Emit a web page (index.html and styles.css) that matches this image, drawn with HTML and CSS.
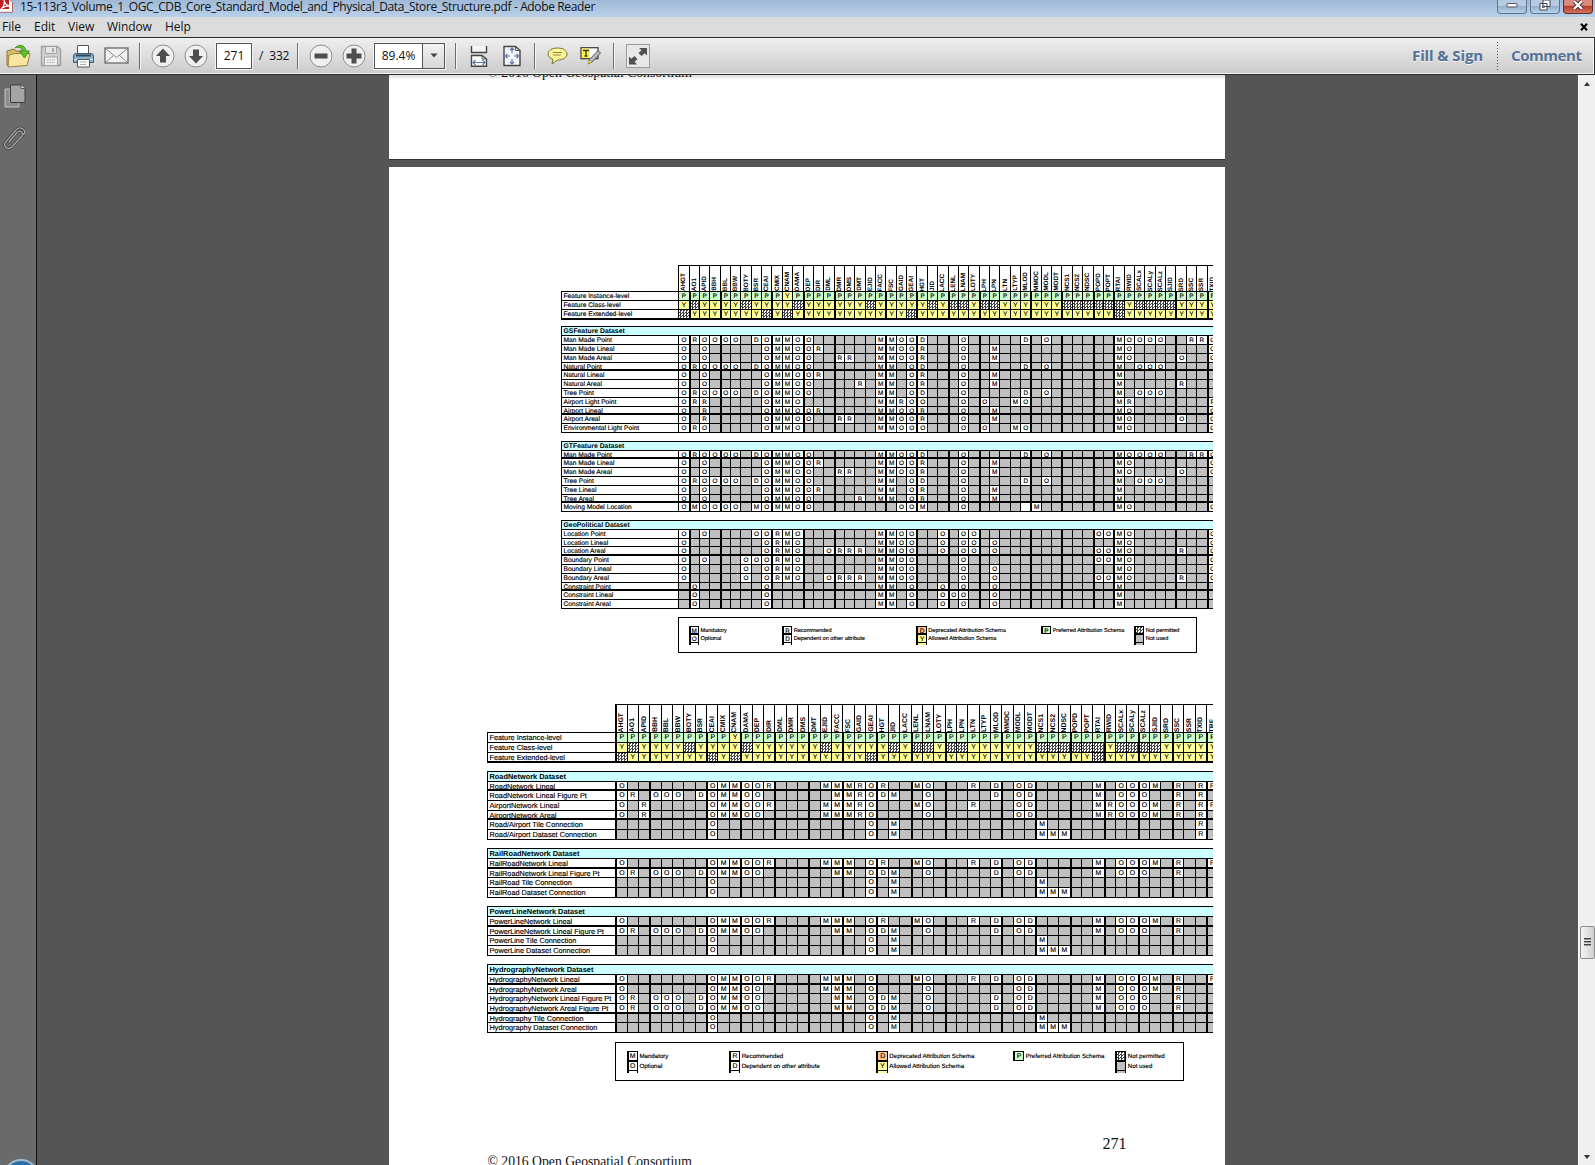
FILE: index.html
```html
<!DOCTYPE html>
<html lang="en">
<head>
<meta charset="utf-8">
<title>15-113r3_Volume_1_OGC_CDB_Core_Standard_Model_and_Physical_Data_Store_Structure.pdf - Adobe Reader</title>
<link rel="stylesheet" href="styles.css">
</head>
<body>
<div class="app">
  <header class="titlebar">
    <svg class="app-icon" width="13" height="13" viewBox="0 0 13 13"><path d="M-1 -1H9L12.500 2V12.300H-1Z" fill="#fff" stroke="#a66" stroke-width="1"/><rect width="9" height="9" fill="#c01c22"/><path d="M1 9C4.500 6 5 3 4 0M4.500 2C6 5 9 6.500 12 6.500M2 8C5 6 8 5.500 12 6" stroke="#fff" stroke-width="1.300" fill="none"/></svg>
    <span class="title">15-113r3_Volume_1_OGC_CDB_Core_Standard_Model_and_Physical_Data_Store_Structure.pdf - Adobe Reader</span>
    <div class="win-btns">
      <span class="win-btn"><svg width="12" height="10" viewBox="0 0 12 10"><rect x="1" y="3.5" width="10" height="3.5" rx="1" fill="#fff" stroke="#556"/></svg></span>
      <span class="win-btn"><svg width="12" height="12" viewBox="0 0 12 12"><path d="M4 1H11V7.500H4Z M1 4.500H8V11H1Z" fill="#fff" stroke="#445" stroke-width="1"/><rect x="3.500" y="7" width="2" height="1.500" fill="#7d99b8" stroke="#445" stroke-width=".7"/></svg></span>
      <span class="win-btn close"><svg width="12" height="10" viewBox="0 0 12 10"><path d="M2 1L10 9M10 1L2 9" stroke="#4b2530" stroke-width="4"/><path d="M2 1L10 9M10 1L2 9" stroke="#fff" stroke-width="2.400"/></svg></span>
    </div>
  </header>
  <nav class="menubar">
    <span class="m-file">File</span><span class="m-edit">Edit</span><span class="m-view">View</span><span class="m-window">Window</span><span class="m-help">Help</span>
    <svg class="doc-close" width="8" height="8" viewBox="0 0 8 8"><path d="M1 .8L7 7.200M7 .8L1 7.200" stroke="#000" stroke-width="2"/></svg>
  </nav>
  <div class="toolbar">
    <span class="tool"><svg width="26" height="26" viewBox="0 0 26 26"><path d="M2 8L9 6L11 8H21V22H2Z" fill="#d9bf67" stroke="#8a7430"/><path d="M4 12L9 10.500H25L22 22.500L3 24Z" fill="#f7e6a0" stroke="#9a8239"/><path d="M10 5C13 1 20 1 21 8H24.500L19.500 15L14.500 8H17.500C17 4.500 14 4 10 5Z" fill="#5fbf2d" stroke="#37801a" stroke-width=".8"/></svg></span>
    <span class="tool"><svg width="22" height="22" viewBox="0 0 22 22"><path d="M1.500 1.500H17.500L20.500 4.500V20.500H1.500Z" fill="#d0d0d0" stroke="#9d9d9d" stroke-width="1.300"/><path d="M5.500 2V8.500H16.500V2" fill="#e6e6e6" stroke="#a5a5a5"/><path d="M13 3V7" stroke="#999" stroke-width="1.500"/><rect x="4.500" y="12" width="13" height="8.500" fill="#eee" stroke="#a5a5a5"/><path d="M7 15H15M7 17.500H15" stroke="#aaa" stroke-dasharray="1.500 1"/></svg></span>
    <span class="tool"><svg width="23" height="24" viewBox="0 0 23 24"><path d="M5.500 10V1.500H16.500V10" fill="#fff" stroke="#555"/><path d="M1.500 12Q1.500 9.500 4 9.500H19Q21.500 9.500 21.500 12V18.500H1.500Z" fill="#8bb0cc" stroke="#3d6079"/><path d="M4 11.500H19" stroke="#31485a" stroke-width="2"/><path d="M2 15.500H21" stroke="#dcebf5"/><path d="M5.500 15.500H17.500V23H5.500Z" fill="#fff" stroke="#555"/><path d="M8 18H15M8 20.500H14" stroke="#aaa"/></svg></span>
    <span class="tool"><svg width="25" height="17" viewBox="0 0 25 17"><rect x="1" y="1" width="23" height="15" fill="#f2f2f2" stroke="#696969" stroke-width="1.300"/><path d="M2 2L12.500 10.500L23 2M2 15L9.500 8.500M23 15L15.500 8.500" fill="none" stroke="#8a8a8a"/></svg></span>
    <span class="sep"></span>
    <span class="tool"><svg width="24" height="24" viewBox="0 0 24 24"><circle cx="12" cy="12" r="11" fill="#efefef" stroke="#8d8d8d"/><path d="M12 4.500L19 12H15V18.500H9V12H5Z" fill="#4d4d4d"/></svg></span>
    <span class="tool"><svg width="24" height="24" viewBox="0 0 24 24"><circle cx="12" cy="12" r="11" fill="#efefef" stroke="#8d8d8d"/><path d="M12 19.500L19 12H15V5.500H9V12H5Z" fill="#4d4d4d"/></svg></span>
    <span class="field page-field">271</span>
    <span class="page-total">/&nbsp; 332</span>
    <span class="sep"></span>
    <span class="tool"><svg width="24" height="24" viewBox="0 0 24 24"><circle cx="12" cy="12" r="11" fill="#efefef" stroke="#8d8d8d"/><rect x="5.500" y="9.500" width="13" height="5" fill="#4d4d4d"/></svg></span>
    <span class="tool"><svg width="24" height="24" viewBox="0 0 24 24"><circle cx="12" cy="12" r="11" fill="#efefef" stroke="#8d8d8d"/><path d="M9.500 4.500H14.500V9.500H19.500V14.500H14.500V19.500H9.500V14.500H4.500V9.500H9.500Z" fill="#4d4d4d"/></svg></span>
    <span class="field zoom-field"><span class="zoom-value">89.4%</span><span class="zoom-drop"><svg width="8" height="5" viewBox="0 0 8 5"><path d="M.5 .5H7.500L4 4.500Z" fill="#444"/></svg></span></span>
    <span class="sep after-field"></span>
    <span class="tool"><svg width="18" height="22" viewBox="0 0 18 22"><path d="M1.500 1V7.500H16.500V1" fill="#f5f5f5" stroke="#444" stroke-width="1.400"/><path d="M1.500 21.300V10.500H12L16.500 14V21.300Z" fill="#fff" stroke="#444" stroke-width="1.400"/><path d="M12 10.500V14H16.500" fill="none" stroke="#555"/><path d="M3 17.500H15M5.500 15L3 17.500L5.500 20M12.500 15L15 17.500L12.500 20" fill="none" stroke="#6473ad" stroke-width="1.200"/></svg></span>
    <span class="tool"><svg width="18" height="22" viewBox="0 0 18 22"><path d="M1 1.500H12.500L17 5.500V20.500H1Z" fill="#f4f5fc" stroke="#444" stroke-width="1.400"/><path d="M12.500 1.500V5.500H17" fill="none" stroke="#555"/><path d="M9 3V8M9 14V19M2.500 11H7M11 11H15.500M7 5L9 3L11 5M7 17L9 19L11 17M4.500 9L2.500 11L4.500 13M13.500 9L15.500 11L13.500 13" fill="none" stroke="#6473ad" stroke-width="1.200"/></svg></span>
    <span class="sep"></span>
    <span class="tool"><svg width="21" height="18" viewBox="0 0 21 18"><path d="M10.500 1C16 1 20 3.400 20 7S16 13 10.500 13L5 17L6 12.400C3 11.500 1 9.500 1 7C1 3.400 5 1 10.500 1Z" fill="#fbf69a" stroke="#776f2d"/><path d="M6 5.500H15M6 8H14" stroke="#8f8535"/></svg></span>
    <span class="tool"><svg width="21" height="19" viewBox="0 0 21 19"><rect x="1" y="1.700" width="17" height="11" fill="#fff" stroke="#444" stroke-width="1.300"/><rect x="2" y="2.500" width="8" height="9.500" fill="#fff34a"/><path d="M3 4.500H9M6 4V10M4.500 10H7.500" stroke="#333" stroke-width="1.300"/><path d="M18 4.500L20.500 7L12 16L8 18L9.500 13.500Z" fill="#bbb" stroke="#555"/><path d="M7 18L9 14.500L11.500 16.500Z" fill="#e6c92b"/></svg></span>
    <span class="sep"></span>
    <span class="tool full"><svg width="24" height="24" viewBox="0 0 24 24"><rect x=".5" y=".5" width="23" height="23" fill="#e8e8e8" stroke="#9b9b9b"/><path d="M13 4H21V11.500L18.700 9.300L15.500 12L12.500 9L15.500 6.200Z M3 12.500L5.300 14.800L8.500 12L11.500 15L8.600 17.700L11 20.500H3Z" fill="#505050"/></svg></span>
    <span class="pane-link fill">Fill &amp; Sign</span><span class="dots"></span><span class="pane-link comment">Comment</span>
  </div>
  <main class="workspace">
    <aside class="rail">
      <svg width="22" height="24" viewBox="0 0 22 24"><path d="M1 5H6V18.500H15V23H1Z" fill="#8d8d8d" stroke="#c2c2c2"/><path d="M6.500 1H17L21 4.500V18.500H6.500Z" fill="#a5a5a5" stroke="#3c3c3c"/><path d="M17 1V4.500H21" fill="#ddd" stroke="#555"/></svg>
      <svg width="22" height="24" viewBox="0 0 22 24"><g fill="none" stroke-linecap="round"><path d="M6 16L14 6.500Q16.500 4 18.500 6T18.500 10.500L9 21Q5.500 24 3 21.500T2.500 16L13.500 3.500Q17 .500 20 3T20.500 8.500" stroke="#3d3d3d" stroke-width="2.600"/><path d="M6 16L14 6.500Q16.500 4 18.500 6T18.500 10.500L9 21Q5.500 24 3 21.500T2.500 16L13.500 3.500Q17 .500 20 3T20.500 8.500" stroke="#aaa" stroke-width="1.200"/></g></svg>
      <span class="orb"></span>
    </aside>
    <div class="canvas">
      <section class="sheet previous"><p class="footer-text">© 2016 Open Geospatial Consortium</p></section>
      <section class="sheet current">
        <div class="matrix small" id="feature-matrix"></div>
        <div class="matrix large" id="network-matrix"></div>
        <p class="page-number">271</p>
        <p class="footer-text">© 2016 Open Geospatial Consortium</p>
      </section>
    </div>
    <div class="scrollbar"><span class="arrow up"></span><span class="thumb"><i></i><i></i><i></i></span><span class="arrow down"></span></div>
  </main>
</div>
<script src="matrix.js"></script>
</body>
</html>
```
FILE: styles.css
```css
* { box-sizing: border-box; }
body { margin: 0; font-family: "Open Sans", "Noto Sans", sans-serif; font-size: 12px; color: #111; }
.app { width: 1595px; height: 1165px; display: flex; flex-direction: column; overflow: hidden; background: #555; }
svg { display: block; flex: none; }

.titlebar { height: 17px; flex: none; display: flex; align-items: flex-start; background: linear-gradient(#9fb9d6, #b9d0ea); }
.app-icon { margin-right: 7px; }
.title { line-height: 13px; white-space: nowrap; font-size: 12px; letter-spacing: -0.36px; }
.win-btns { margin-left: auto; display: flex; gap: 3px; padding-right: 2px; }
.win-btn { width: 30px; height: 14px; display: flex; justify-content: center; align-items: center; padding-bottom: 3px; border: 1px solid #5c7591; border-top: 0; border-radius: 0 0 4px 4px; background: linear-gradient(#b6cbe2 45%, #95b0cd 50%, #b9d3ec); }
.win-btn.close { background: linear-gradient(#d98a7c 40%, #b7402f 50%, #d4715c); border-color: #5b2a2a; }

.menubar { height: 20px; flex: none; display: flex; align-items: center; padding-left: 2px; background: #dcdcdc; }
.menubar span { line-height: 18px; }
.m-file { width: 32px; } .m-edit { width: 34px; } .m-view { width: 39px; } .m-window { width: 58px; letter-spacing: -0.1px; }
.doc-close { margin-left: auto; margin-right: 7px; }

.toolbar { height: 38px; flex: none; display: flex; align-items: center; padding: 0 0 1px 1px; border: solid #2c2c2c; border-width: 1px 1px 1px 0; background: linear-gradient(#efefef, #cbcbcb); box-shadow: inset -1px -1px #f4f4f4, inset 0 1px #f4f4f4; }
.tool { width: 33px; display: flex; justify-content: center; flex: none; }
.tool.full { margin-left: 1px; }
.sep { width: 13px; height: 26px; flex: none; background: linear-gradient(90deg, transparent 6px, #6c6c6c 6px, #6c6c6c 7px, #f6f6f6 7px, #f6f6f6 8px, transparent 8px); }
.field { height: 26px; background: #fff; border: 1px solid #555; outline: 1px solid #f4f4f4; display: flex; align-items: center; justify-content: center; margin-left: 4px; flex: none; }
.page-field { width: 36px; }
.page-total { width: 39px; padding-left: 7px; flex: none; white-space: nowrap; letter-spacing: -0.15px; }
.zoom-field { width: 71px; }
.zoom-value { flex: 1; text-align: center; }
.zoom-drop { width: 22px; height: 24px; border-left: 1px solid #555; background: linear-gradient(#f3f3f3, #d6d6d6); display: flex; align-items: center; justify-content: center; }
.after-field { margin-left: 4px; }
.pane-link { font-size: 15px; line-height: 20px; padding-bottom: 2px; font-weight: bold; color: #557196; text-shadow: 0 1px #f4f4f4; white-space: nowrap; letter-spacing: -0.35px; }
.pane-link.fill { margin-left: auto; width: 85px; letter-spacing: -0.1px; }
.dots { width: 1px; height: 28px; background: repeating-linear-gradient(#555 0 1px, transparent 1px 3px); }
.pane-link.comment { width: 83px; margin-left: 13px; letter-spacing: -0.42px; }

.workspace { flex: 1; min-height: 0; display: flex; }
.rail { width: 37px; flex: none; border-right: 1px solid #111; background: #6a6a6a; display: flex; flex-direction: column; padding: 9px 0 0 4px; gap: 19px; overflow: hidden; }
.rail svg + svg { margin: -1px 0 1px -1px; }
.orb { width: 36px; height: 36px; border-radius: 50%; margin: 989px 0 0 -1px; background: #2d6da5; border: 2px solid #9fb9cf; flex: none; }
.canvas { flex: 1; display: flex; flex-direction: column; padding-left: 352px; background: #555; overflow: hidden; }
.sheet { width: 836px; flex: none; background: #fff; }
.previous { height: 84px; margin-bottom: 8px; overflow: hidden; box-shadow: 0 1px #333; background: linear-gradient(#ddd, #fff 5px); }
.footer-text { margin: 0; padding-left: 98.500px; font: 13.700px/18px "Liberation Serif", serif; color: #111; white-space: nowrap; }
.previous .footer-text { margin-top: -11px; }
.current { height: 1030px; padding-top: 98px; overflow: hidden; display: flex; flex-direction: column; }
.page-number { margin: 51px 0 0 713.500px; font: 16px/22px "Liberation Serif", serif; }
.page-number + .footer-text { margin-top: -2px; }

/* Attribute matrices: one uniform grid each, clipped at the right print margin */
.matrix { flex: none; display: grid; font-family: "Liberation Sans", sans-serif; color: #000; overflow: hidden; text-rendering: geometricPrecision; -webkit-text-stroke: .15px #000; }
.small { --row: 8.806px; --cell: 6.400px; --label: 6.650px; --title: 6.850px; --legend: 5.600px; --head: 6.400px; margin-left: 172px; width: 652px; height: 388px; grid-template: 26.300px repeat(41, var(--row)) / 117.200px repeat(52, 10.370px); }
.large { --row: 9.677px; --cell: 6.900px; --label: 7.300px; --title: 7.400px; --legend: 6.150px; --head: 6.900px; margin: 51px 0 0 98px; width: 726px; height: 378px; grid-template: 28.300px repeat(36, var(--row)) / 128.200px repeat(53, 11.360px); }
.cell, .label, .head, .section { border: solid #000; border-width: 1px 0 0 1px; min-width: 0; min-height: 0; white-space: nowrap; line-height: calc(var(--row) + .5px); }
.cell { font-size: var(--cell); text-align: center; background: #fff; }
.label { font-size: var(--label); padding-left: 1.500px; background: #fff; }
.section { font-size: var(--title); font-weight: bold; padding-left: 1.500px; background: #cff; -webkit-text-stroke: 0; }
.head { display: flex; align-items: flex-end; justify-content: center; font-size: var(--head); font-weight: bold; -webkit-text-stroke: 0; }
.head span { writing-mode: vertical-rl; transform: rotate(180deg); line-height: 9px; flex: none; }
.cell.thick, .large .first { border-left-width: 2px; }
.heavy { box-shadow: 0 -1px #000; }
.bottom { box-shadow: 0 1px #000; }
.bottom.heavy { box-shadow: 0 1px #000, 0 -1px #000; }
.level-end { box-shadow: 0 2px #000; }
.gray { background: #c0c0c0; }
.green { background: #cfc; }
.yellow { background: #ff9; }
.orange { background: #ffc58f; }
.hatch { background: conic-gradient(#444 25%, #fff 0 50%, #444 0 75%, #fff 0) 0 0 / 3px 3px; }
.legend-box { border: 1px solid #000; margin: 0 -1px -1px 0; }
.legend-text { font-size: var(--legend); white-space: nowrap; line-height: calc(var(--row) + 1.500px); padding-left: 1.500px; }
.swatch { border-width: 1px 1px 1px 2px; }
.tail { border: solid #000; border-width: 0 1px 0 2px; height: 2px; }

.scrollbar { width: 17px; flex: none; border-left: 1px solid #fff; background: #f0f0f0; display: flex; flex-direction: column; align-items: center; }
.arrow { border: 3.500px solid transparent; border-top: 0; border-bottom: 4px solid #333; margin-top: 7px; }
.arrow.down { border-top: 4px solid #333; border-bottom: 0; margin: auto 0 6px; }
.thumb { width: 15px; height: 33px; margin-top: 840px; border: 1px solid #8f8f8f; border-radius: 2px; background: linear-gradient(90deg, #f5f5f5, #cfcfcf); display: flex; flex-direction: column; align-items: center; justify-content: center; gap: 1px; padding-bottom: 1px; }
.thumb i { width: 7px; height: 2px; background: linear-gradient(#444 50%, #999 50%); }
```
FILE: matrix.js
```js
const COLUMNS = ("AHGT AO1 APID BBH BBL BBW BOTY BSR CEAI CMIX CNAM DAMA DEP DIR DML DMR DMS DMT EJID FACC FSC GAID GEAI HGT " +
  "JID LACC LENL LNAM LOTY LPH LPN LTN LTYP MLOD MMDC MODL MODT NCS1 NCS2 NDSC POPD POPT RTAI RWID SCALx SCALy SCALz SJID SRD SSC SSR TXID TRF").split(" ");

const LEVELS = [
  ["Feature Instance-level", "PPPPPPPP PPYPP PPPPPP PPPPP PPPPPPPPP PPPP PPPPP PPPPPP PPPPP"],
  ["Feature Class-level", "Y#YYYY#Y YYY#Y YYYYY# YYYYY #Y##Y##YY YYYY ##### #Y#### YYYYY"],
  ["Feature Extended-level", "#YYYYYYY #Y#YY YYYYYY YYY#Y YYYYYYYYY YYYY YYYYY #YYYYY YYYYY"]
];

const FEATURE_ROWS = [
  ["GSFeature Dataset"],
  ["Man Made Point", "OROOOO.D OMMOO ...... MMOOD ...O..... D.O. ..... MOOOO. .RRO"],
  ["Man Made Lineal", "O.O..... OMMOO R..... MMOOR ...O..M.. .... ..... MO.... ...O"],
  ["Man Made Areal", "O.O..... OMMOO ..RR.. MMOOR ...O..M.. .... ..... MO.... O..O"],
  ["Natural Point", "OROOOO.D OMMOO ...... MM.OD ...O..... D.O. ..... M.OOO. ...."],
  ["Natural Lineal", "O.O..... OMMOO R..... MM.OR ...O..M.. .... ..... M..... ...."],
  ["Natural Areal", "O.O..... OMMOO ....R. MM.OR ...O..M.. .... ..... M..... R..."],
  ["Tree Point", "OROOOO.D OMMOO ...... MM.OD ...O..... D.O. ..... M.OOO. ...."],
  ["Airport Light Point", "ORR..... OMMO. ...... MMROO ...O.O..M O... ..... MR.... ...R"],
  ["Airport Lineal", "O.R..... OMMOO R..... MMOOR ...O..M.. .... ..... MO.... ...O"],
  ["Airport Areal", "O.R..... OMMOO ..RR.. MMOOR ...O..M.. .... ..... MO.... O..O"],
  ["Environmental Light Point", "ORO..... OMMO. ...... MMOOO ...O.O..M O... ..... MO.... ...O"],
  null,
  ["GTFeature Dataset"],
  ["Man Made Point", "OROOOO.D OMMOO ...... MMOOD ...O..... D.O. ..... MOOOO. .RRO"],
  ["Man Made Lineal", "O.O..... OMMOO R..... MMOOR ...O..M.. .... ..... MO.... ...O"],
  ["Man Made Areal", "O.O..... OMMOO ..RR.. MMOOR ...O..M.. .... ..... MO.... O..O"],
  ["Tree Point", "OROOOO.D OMMOO ...... MM.OD ...O..... D.O. ..... M.OOO. ...."],
  ["Tree Lineal", "O.O..... OMMOO R..... MM.OR ...O..M.. .... ..... M..... ...."],
  ["Tree Areal", "O.O..... OMMOO ....R. MM.OR ...O..M.. .... ..... M..... ...."],
  ["Moving Model Location", "OMOOOO.M OMMOO ...... ..OOM ...O..... _M.. ..... MO.... ...O"],
  null,
  ["GeoPolitical Dataset"],
  ["Location Point", "O.O....O ORMO. ...... MMOO. .O.OO.... .... ...OO MO.... ...O"],
  ["Location Lineal", "O....... ORMO. ...... MMOO. .O.OO.O.. .... ..... MO.... ...O"],
  ["Location Areal", "O....... ORMO. .ORRR. MMOO. .O.OO.O.. .... ...OO MO.... R..O"],
  ["Boundary Point", "O.O...OO ORMO. ...... MMOO. ...O..... .... ...OO MO.... ...O"],
  ["Boundary Lineal", "O.....O. ORMO. ...... MMOO. ...O..O.. .... ..... MO.... ...O"],
  ["Boundary Areal", "O.....O. ORMO. .ORRR. MMOO. ...O..O.. .... ...OO MO.... R..O"],
  ["Constraint Point", ".O...... O.... ...... MM.O. .O.O..O.. .... ..... M..... ...."],
  ["Constraint Lineal", ".O...... O.... ...... MM.O. .OOO..O.. .... ..... M..... ...."],
  ["Constraint Areal", ".O...... O.... ...... MM.O. .O.O..O.. .... ..... M..... ...."]
];

const NETWORK_ROWS = [
  ["RoadNetwork Dataset"],
  ["RoadNetwork Lineal", "O....... OMMOO R....M MMROR ..MO...R. D.OD ..... M.OOOM .R.RR"],
  ["RoadNetwork Lineal Figure Pt", "OR.OOO.D OMMOO ...... MMROD M..O..... D.OD ..... M.OOO. .R.R."],
  ["AirportNetwork Lineal", "O.R..... OMMOO R....M MMRO. ..MO...R. ..OD ..... MROOOM .R.RR"],
  ["AirportNetwork Areal", "O.R..... OMMOO .....M MMRO. ...O..... ..OD ..... MROOOM .R.R."],
  ["Road/Airport Tile Connection", "........ O.... ...... ...O. M........ .... M.... ...... ...R."],
  ["Road/Airport Dataset Connection", "........ O.... ...... ...O. M........ .... MMM.. ...... ...R."],
  null,
  ["RailRoadNetwork Dataset"],
  ["RailRoadNetwork Lineal", "O....... OMMOO R....M MM.OR ..MO...R. D.OD ..... M.OOOM .R..R"],
  ["RailRoadNetwork Lineal Figure Pt", "OR.OOO.D OMMOO ...... MM.OD M..O..... D.OD ..... M.OOO. .R..."],
  ["RailRoad Tile Connection", "........ O.... ...... ...O. M........ .... M.... ...... ....."],
  ["RailRoad Dataset Connection", "........ O.... ...... ...O. M........ .... MMM.. ...... ....."],
  null,
  ["PowerLineNetwork Dataset"],
  ["PowerLineNetwork Lineal", "O....... OMMOO R....M MM.OR ..MO...R. D.OD ..... M.OOOM .R..."],
  ["PowerLineNetwork Lineal Figure Pt", "OR.OOO.D OMMOO ...... MM.OD M..O..... D.OD ..... M.OOO. .R..."],
  ["PowerLine Tile Connection", "........ O.... ...... ...O. M........ .... M.... ...... ....."],
  ["PowerLine Dataset Connection", "........ O.... ...... ...O. M........ .... MMM.. ...... ....."],
  null,
  ["HydrographyNetwork Dataset"],
  ["HydrographyNetwork Lineal", "O....... OMMOO R....M MM.O. ..MO...R. D.OD ..... M.OOOM .R..R"],
  ["HydrographyNetwork Areal", "O....... OMMOO .....M MM.O. ...O..... ..OD ..... M.OOOM .R..."],
  ["HydrographyNetwork Lineal Figure Pt", "OR.OOO.D OMMOO ...... MM.OD M..O..... D.OD ..... M.OOO. .R..."],
  ["HydrographyNetwork Areal Figure Pt", "OR.OOO.D OMMOO ...... MM.OD M..O..... D.OD ..... M.OOO. .R..."],
  ["Hydrography Tile Connection", "........ O.... ...... ...O. M........ .... M.... ...... ....."],
  ["Hydrography Dataset Connection", "........ O.... ...... ...O. M........ .... MMM.. ...... ....."]
];

const LEGEND = [
  [1, 0, "M", "", "Mandatory"], [1, 1, "O", "", "Optional"],
  [10, 0, "R", "", "Recommended"], [10, 1, "D", "", "Dependent on other attribute"],
  [23, 0, "D", "orange", "Deprecated Attribution Schema"], [23, 1, "Y", "yellow", "Allowed Attribution Schema"],
  [35, 0, "P", "green", "Preferred Attribution Schema"],
  [44, 0, "", "hatch", "Not permitted"], [44, 1, "", "gray", "Not used"]
];

function build(id, rows, count, thick, thickRows) {
  const host = document.getElementById(id);
  const add = (cls, text, row, col, span = 1, rowSpan = 1) => {
    const el = document.createElement("div");
    el.className = cls;
    el.textContent = text;
    el.style.gridArea = `${row} / ${col} / span ${rowSpan} / span ${span}`;
    host.append(el);
    return el;
  };
  const edge = i => (i === 0 ? " first" : "") + (thick.includes(i) ? " thick" : "");
  for (let i = 0; i < count; i++) {
    const name = document.createElement("span");
    name.textContent = COLUMNS[i];
    add("head" + edge(i), "", 1, i + 2).append(name);
  }

  const all = [...LEVELS, null, ...rows];
  all.forEach((entry, r) => {
    if (!entry) return;
    const [label, codes] = entry;
    const last = !all[r + 1] ? (r === 2 ? " level-end" : " bottom") : "";
    if (!codes) { add("section", label, r + 2, 1, count + 1); return; }
    const heavy = thickRows.includes(r) ? " heavy" : "";
    const put = (cls, text, col) => add(cls + last + heavy, text, r + 2, col);
    put("label", label, 1);
    [...codes.replace(/ /g, "")].slice(0, count).forEach((c, i) => {
      const tint = c === "." ? " gray" : c === "#" ? " hatch" : r < 3 ? (c === "P" ? " green" : " yellow") : "";
      put("cell" + tint + edge(i), /[A-Z]/.test(c) ? c : "", i + 2);
    });
  });

  const top = all.length + 3;
  add("legend-box", "", top, 2, 50, 4);
  for (const [col, line, code, tint, text] of LEGEND) {
    add("cell swatch " + tint, code, top + 1 + line, col + 2);
    add("legend-text", text, top + 1 + line, col + 3, 8);
    if (line) add("tail " + tint, "", top + 3, col + 2);
  }
}

build("feature-matrix", FEATURE_ROWS, 52, [1, 4, 9, 12, 15, 20, 23, 26, 29, 34, 37, 40, 42, 48, 51], [9, 14, 19, 24, 30, 34]);
build("network-matrix", NETWORK_ROWS, 53, [3, 8, 11, 14, 17, 20, 23, 26, 29, 34, 37, 40, 43, 46, 49, 52], [6, 9, 14, 20, 26, 29]);
```
